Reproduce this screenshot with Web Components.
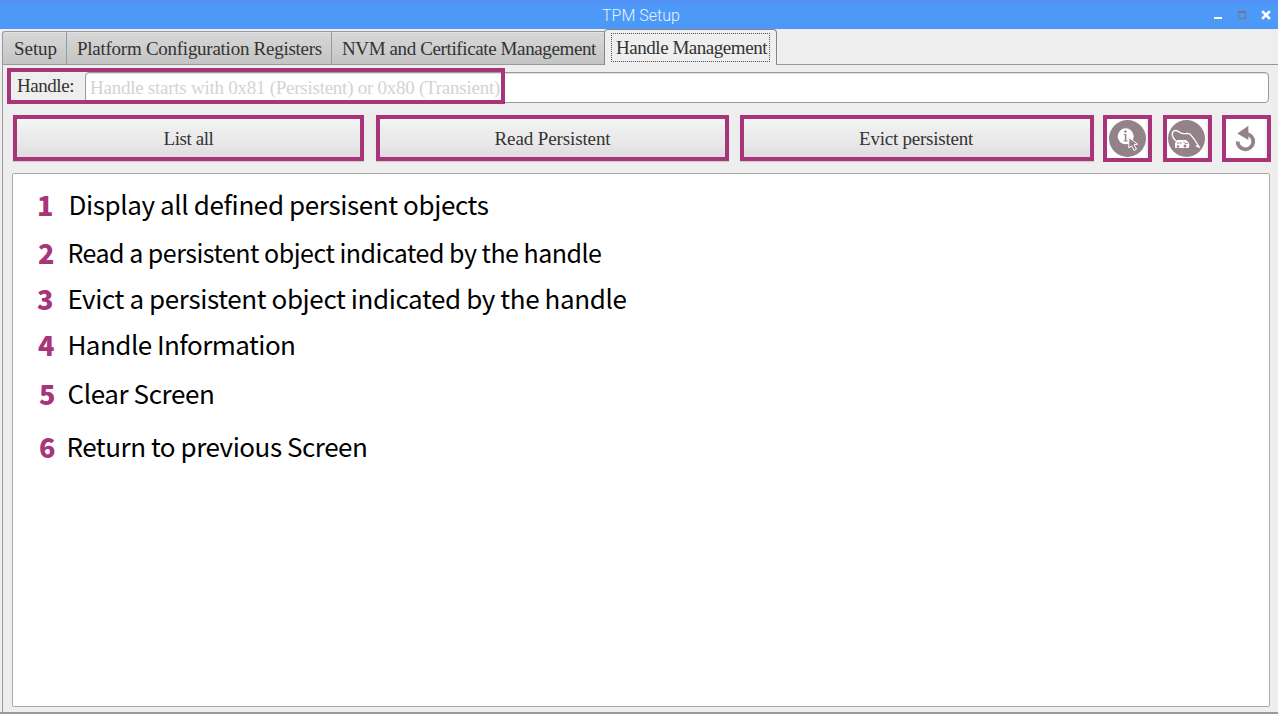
<!DOCTYPE html>
<html lang="en">
<head>
<meta charset="utf-8">
<title>TPM Setup</title>
<style>
html,body{margin:0;height:100%;overflow:hidden;background:#eee}
</style>
</head>
<body>
<tpm-window></tpm-window>
<script>
const define = (name, html, setup) => customElements.define(name, class extends HTMLElement {
  connectedCallback() {
    if (this.shadowRoot) return;
    this.attachShadow({ mode: 'open' }).innerHTML = html;
    if (setup) setup(this, this.shadowRoot);
  }
});

/* One line of text, tracked so that it takes exactly the width given in "w". */
define('fit-text', `<style>:host{display:inline-block;white-space:pre}span{display:inline-block}</style><span><slot></slot></span>`, (el, root) => {
  const span = root.querySelector('span');
  const target = parseFloat(el.getAttribute('w'));
  const natural = span.getBoundingClientRect().width;
  el.style.letterSpacing = ((target - natural) / el.textContent.length) + 'px';
});

define('title-bar', `<style>
:host{display:grid;grid-template-columns:1fr auto 1fr;height:29px;background:linear-gradient(#5a8df8 0,#5090f4 2px,#4c97f5 4px,#4d99f7 6px);color:#e6f2ff;font:300 16px/31px Roboto,sans-serif}
.t{grid-column:2;padding-left:4px}
.c{justify-self:end;width:64px;height:29px}
svg{display:block}
</style><span class="t"><slot></slot></span>
<span class="c"><svg width="64" height="29" viewBox="0 0 64 29"><path d="M0 17h8v2H0z" fill="#fff"/><path d="M24.500 11.500h7v7h-7z" fill="none" stroke="#707880" stroke-width="1"/><path d="M24 11h8v2h-8z" fill="#707880"/><path d="M49 12l6 6M55 12l-6 6" stroke="#fff" stroke-width="2.500" stroke-linecap="square"/></svg></span>`);

define('nb-tab', `<style>
:host{display:flex;box-sizing:border-box;height:34px;padding-left:10px;align-items:flex-start;border:1px solid #999;border-right:0;background:linear-gradient(#d8d8d8,#c4c4c4);box-shadow:inset 0 1px #e3e3e3;color:#333;line-height:33px}
:host([first]){border-top-left-radius:3px;padding-left:11px}
:host([active]){height:36px;border:1px solid #858585;border-bottom:0;border-radius:4px 4px 0 0;background:#efefef;box-shadow:none;padding:3px 0 0 6px}
span{display:block}
:host([active]) span{border:1px dotted #555;height:29px;line-height:28px;width:159px;padding-left:4px;box-sizing:border-box;white-space:nowrap}
</style><span><slot></slot></span>`);

define('tab-strip', `<style>
:host{display:grid;grid-template-columns:64px 265px 273px 173px 1fr;align-items:end;height:36px;padding-left:2px;background:#eee}
i{height:35px;border-bottom:1px solid #999}
</style><slot></slot><i></i>`);

define('handle-row', `<style>
:host{display:flex;position:relative;height:31px;margin:7px 9px 0 7px;color:#333}
label{width:68px;padding-left:10px;line-height:27px}
.e{flex:1;box-sizing:border-box;height:31px;border:1px solid #999;border-radius:4px;background:#fff;box-shadow:inset 0 1px 1px #ddd;padding-left:4px;line-height:29px;color:#d3d3d3}
.m{position:absolute;left:0;top:-4px;width:498px;height:36px;box-sizing:border-box;border:4px solid #a8347a}
</style><label><slot name="label"></slot></label><div class="e"><slot></slot></div><div class="m"></div>`);

define('push-button', `<style>
:host{display:flex;justify-content:center;box-sizing:border-box;height:46px;border:4px solid #a8347a;background:linear-gradient(#f5f5f5,#ececec 35%,#e8e8e8 65%,#dcdcdc);box-shadow:0 1px 1px #ccc;color:#333;line-height:40px}
</style><slot></slot>`);

define('icon-button', `<style>
:host{display:flex;align-items:center;box-sizing:border-box;width:49px;height:47px;border:4px solid #a8347a;background:linear-gradient(90deg,#fff 38px,#eee 40px)}
svg{display:block}
</style><svg width="41" height="39" viewBox="0 0 41 39"></svg>`, (el, root) => {
  root.querySelector('svg').innerHTML = {
    info: `<circle cx="20.500" cy="19.500" r="18.500" fill="#93828a"/><circle cx="18.700" cy="17.300" r="8" fill="#fff"/><g fill="#93828a"><circle cx="18.500" cy="12.500" r="1.200"/><path d="M16.800 15h2.600v6.600h1.200v1h-4v-1h1.200v-5.600h-1z"/></g><path d="M21.800 18.500v10.500l2.700-2.200 2.500 4.700 2.500-1.300-2.400-4.500 3.600-.5z" fill="#93828a" stroke="#fff" stroke-width="1"/>`,
    vacuum: `<circle cx="19.500" cy="19.500" r="18.500" fill="#93828a"/><path d="M9 22C5.500 19.500 4 14.500 6.500 12.200C8.500 10.500 11 12 13 13.500C16 16 19 13.500 23 15L27.500 20.500L32 28" fill="none" stroke="#fff" stroke-width="1.300"/><path d="M28 27l3.500-1.200 2 3.700z" fill="#fff"/><path d="M8 24l2-3h9c2 1 3 3 3.500 5.500l-1 2.500H8z" fill="#fff"/><path d="M10 24h5M16.500 22.500l1.500 2h3" fill="none" stroke="#93828a" stroke-width=".8"/><circle cx="11" cy="27.500" r="1.300" fill="#93828a"/><circle cx="18" cy="27" r="1.500" fill="#93828a"/>`,
    back: `<path d="M11.600 22.500A7.800 7.800 0 1 0 20.500 14.800" fill="none" stroke="#93828a" stroke-width="3.800"/><path d="M11.300 14.500L22.400 6.800v14.200z" fill="#93828a"/>`
  }[el.getAttribute('icon')];
});

define('tool-row', `<style>
:host{display:grid;grid-template-columns:363px 364px 363px 60px 59px 49px;margin:12px 0 0 13px;height:47px;justify-content:start}
::slotted(*:nth-child(1)){width:351px}
::slotted(*:nth-child(2)){width:353px}
::slotted(*:nth-child(3)){width:354px}
</style><slot></slot>`);

define('note-row', `<style>
:host{display:flex;height:40px;color:#000;font:var(--size,26px)/40px "Noto Sans CJK SC",sans-serif}
b{display:block;color:#a8347a;font-weight:900;font-size:27px;line-height:41px}
</style><b></b><slot></slot>`, (el, root) => { root.querySelector('b').textContent = el.getAttribute('n'); });

define('output-pane', `<style>
:host{display:block;box-sizing:border-box;flex:1;margin:11px 8px 5px 12px;border:1px solid #aaa;border-radius:2px;background:#fff;padding-top:10px}
</style><slot></slot>`);

define('tpm-window', `<style>
:host{display:flex;flex-direction:column;width:1278px;height:714px;background:#eee;font:19px "Liberation Serif",serif;overflow:hidden}
main{flex:1;display:flex;flex-direction:column;box-sizing:border-box;background:linear-gradient(#999,#999) 2px 0/1px 100% no-repeat,#eee;border-bottom:2px solid #999}
note-row{padding-left:var(--p)}
note-row fit-text{margin-left:var(--g)}
</style>
<title-bar><fit-text w="78">TPM Setup</fit-text></title-bar>
<tab-strip>
<nb-tab first><fit-text w="43">Setup</fit-text></nb-tab>
<nb-tab><fit-text w="245">Platform Configuration Registers</fit-text></nb-tab>
<nb-tab><fit-text w="254">NVM and Certificate Management</fit-text></nb-tab>
<nb-tab active><fit-text w="151">Handle Management</fit-text></nb-tab>
</tab-strip>
<main>
<handle-row><fit-text slot="label" w="57">Handle:</fit-text><fit-text w="410">Handle starts with 0x81 (Persistent) or 0x80 (Transient)</fit-text></handle-row>
<tool-row>
<push-button><fit-text w="50">List all</fit-text></push-button>
<push-button><fit-text w="116">Read Persistent</fit-text></push-button>
<push-button><fit-text w="114" style="margin-right:2px">Evict persistent</fit-text></push-button>
<icon-button icon="info"></icon-button><icon-button icon="vacuum"></icon-button><icon-button icon="back"></icon-button>
</tool-row>
<output-pane>
<note-row n="1" style="--p:24px;--g:15px"><fit-text w="420">Display all defined persisent objects</fit-text></note-row>
<note-row n="2" style="--p:25px;--g:13px;--size:25px;margin-top:8px"><fit-text w="534">Read a persistent object indicated by the handle</fit-text></note-row>
<note-row n="3" style="--p:24px;--g:14px;margin-top:6px"><fit-text w="559">Evict a persistent object indicated by the handle</fit-text></note-row>
<note-row n="4" style="--p:25px;--g:13px;margin-top:6px"><fit-text w="228">Handle Information</fit-text></note-row>
<note-row n="5" style="--p:26px;--g:12px;margin-top:9px"><fit-text w="147">Clear Screen</fit-text></note-row>
<note-row n="6" style="--p:26px;--g:11px;margin-top:13px"><fit-text w="301">Return to previous Screen</fit-text></note-row>
</output-pane>
</main>`);
</script>
</body>
</html>
